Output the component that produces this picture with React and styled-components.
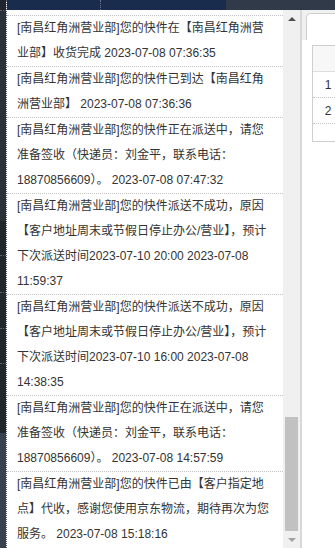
import React from "react";
import styled, { createGlobalStyle } from "styled-components";

const GlobalStyle = createGlobalStyle`
  html, body {
    margin: 0;
    padding: 0;
  }
  body {
    width: 335px;
    height: 548px;
    overflow: hidden;
    background: #fff;
    font-family: "Liberation Sans", "Noto Sans CJK SC", sans-serif;
  }
`;

const Page = styled.div`
  display: flex;
  width: 335px;
  height: 548px;
  overflow: hidden;
`;

const Sidebar = styled.div`
  width: 7px;
  flex: none;
  display: flex;
  flex-direction: column;
  border-right: 1px dotted #59606b;
  box-sizing: border-box;
`;

const SideBlock = styled.div`
  height: ${(p) => p.h}px;
  flex: ${(p) => (p.grow ? 1 : "none")};
  background: ${(p) => p.bg};
  border-bottom: ${(p) => (p.line ? "1px dotted #5a616b" : "none")};
`;

const Main = styled.div`
  flex: 1;
  min-width: 0;
  display: flex;
  flex-direction: column;
`;

const TopBar = styled.div`
  height: 10px;
  flex: none;
  display: flex;
`;

const TopSeg = styled.div`
  width: ${(p) => (p.w ? `${p.w}px` : "auto")};
  flex: ${(p) => (p.w ? "none" : 1)};
  background: ${(p) => p.bg};
  border-right: ${(p) => (p.dotted ? "1px dotted #6b7890" : "none")};
`;

const Body = styled.div`
  flex: 1;
  min-height: 0;
  display: flex;
`;

const Panel = styled.div`
  width: 293px;
  flex: none;
  display: flex;
  background: #fff;
`;

const List = styled.div`
  width: 276px;
  flex: none;
  padding-top: 5px;
  overflow: hidden;
  box-sizing: border-box;
`;

const Item = styled.div`
  border-top: 1px dotted #c4c4c4;
  padding-left: 10px;
  font-size: 12px;
  line-height: 25px;
  color: #333;
`;

const Line = styled.div`
  white-space: nowrap;
`;

const Scrollbar = styled.div`
  width: 17px;
  flex: none;
  background: #f0f0f0;
  display: flex;
  flex-direction: column;
`;

const ArrowBtn = styled.div`
  height: 17px;
  flex: none;
  display: flex;
  align-items: center;
  justify-content: center;
  &::after {
    content: "";
    width: 0;
    height: 0;
    border-left: 4px solid transparent;
    border-right: 4px solid transparent;
    ${(p) =>
      p.down
        ? `border-top: 4px solid ${p.color};`
        : `border-bottom: 4px solid ${p.color};`}
  }
`;

const Track = styled.div`
  flex: 1;
  display: flex;
  flex-direction: column;
  justify-content: flex-end;
`;

const Thumb = styled.div`
  height: 114px;
  margin: 0 2px;
  background: #c1c1c1;
`;

const Divider = styled.div`
  width: 2px;
  flex: none;
  background: #d8d8d8;
`;

const Right = styled.div`
  flex: 1;
  min-width: 0;
  display: flex;
  flex-direction: column;
  overflow: hidden;
`;

const TabBar = styled.div`
  height: 30px;
  flex: none;
  background: #f0f0f0;
  padding: 3px 0 0 4px;
  box-sizing: border-box;
  display: flex;
`;

const Tab = styled.div`
  flex: 1;
  background: #fff;
  border: 1px solid #cfcfcf;
  border-right: none;
  border-bottom: none;
  border-radius: 5px 0 0 0;
`;

const Content = styled.div`
  flex: 1;
  background: #fff;
  padding: 5px 0 0 10px;
`;

const Table = styled.div`
  width: 220px;
  border: 1px solid #cfcfcf;
  border-right: none;
  display: flex;
  flex-direction: column;
`;

const HeadRow = styled.div`
  height: 25px;
  background: #f7f7f7;
  border-bottom: 1px solid #dedede;
`;

const Row = styled.div`
  height: ${(p) => p.h || 24}px;
  border-bottom: ${(p) => (p.last ? "none" : "1px dotted #c4c4c4")};
  display: flex;
  align-items: center;
`;

const NumCell = styled.div`
  width: 30px;
  text-align: center;
  font-size: 12px;
  color: #333;
`;

const tracks = [
  ["[南昌红角洲营业部]您的快件在【南昌红角洲营", "业部】收货完成 2023-07-08 07:36:35"],
  ["[南昌红角洲营业部]您的快件已到达【南昌红角", "洲营业部】 2023-07-08 07:36:36"],
  [
    "[南昌红角洲营业部]您的快件正在派送中，请您",
    "准备签收（快递员：刘金平，联系电话：",
    "18870856609）。 2023-07-08 07:47:32",
  ],
  [
    "[南昌红角洲营业部]您的快件派送不成功，原因",
    "【客户地址周末或节假日停止办公/营业】，预计",
    "下次派送时间2023-07-10 20:00 2023-07-08",
    "11:59:37",
  ],
  [
    "[南昌红角洲营业部]您的快件派送不成功，原因",
    "【客户地址周末或节假日停止办公/营业】，预计",
    "下次派送时间2023-07-10 16:00 2023-07-08",
    "14:38:35",
  ],
  [
    "[南昌红角洲营业部]您的快件正在派送中，请您",
    "准备签收（快递员：刘金平，联系电话：",
    "18870856609）。 2023-07-08 14:57:59",
  ],
  [
    "[南昌红角洲营业部]您的快件已由【客户指定地",
    "点】代收，感谢您使用京东物流，期待再次为您",
    "服务。 2023-07-08 15:18:16",
  ],
];

const App = () => {
  return (
    <Page>
      <GlobalStyle />
      <Sidebar>
        <SideBlock h={10} bg="#1e252f" line />
        <SideBlock h={210} bg="#2b3039" />
        <SideBlock h={34} bg="#22262d" line />
        <SideBlock h={36} bg="#22262d" line />
        <SideBlock h={35} bg="#22262d" line />
        <SideBlock h={34} bg="#22262d" line />
        <SideBlock h={69} bg="#22262d" />
        <SideBlock grow bg="#38424f" />
      </Sidebar>
      <Main>
        <TopBar>
          <TopSeg w={93} bg="#1a2c4e" dotted />
          <TopSeg w={125} bg="#1a2c4e" />
          <TopSeg bg="#303a48" />
        </TopBar>
        <Body>
          <Panel>
            <List>
              {tracks.map((lines, i) => (
                <Item key={i}>
                  {lines.map((text, j) => (
                    <Line key={j}>{text}</Line>
                  ))}
                </Item>
              ))}
            </List>
            <Scrollbar>
              <ArrowBtn color="#505050" />
              <Track>
                <Thumb />
              </Track>
              <ArrowBtn down color="#a0a0a0" />
            </Scrollbar>
          </Panel>
          <Divider />
          <Right>
            <TabBar>
              <Tab />
            </TabBar>
            <Content>
              <Table>
                <HeadRow />
                <Row h={25}>
                  <NumCell>1</NumCell>
                </Row>
                <Row h={25}>
                  <NumCell>2</NumCell>
                </Row>
                <Row h={17} last />
              </Table>
            </Content>
          </Right>
        </Body>
      </Main>
    </Page>
  );
};

export default App;
